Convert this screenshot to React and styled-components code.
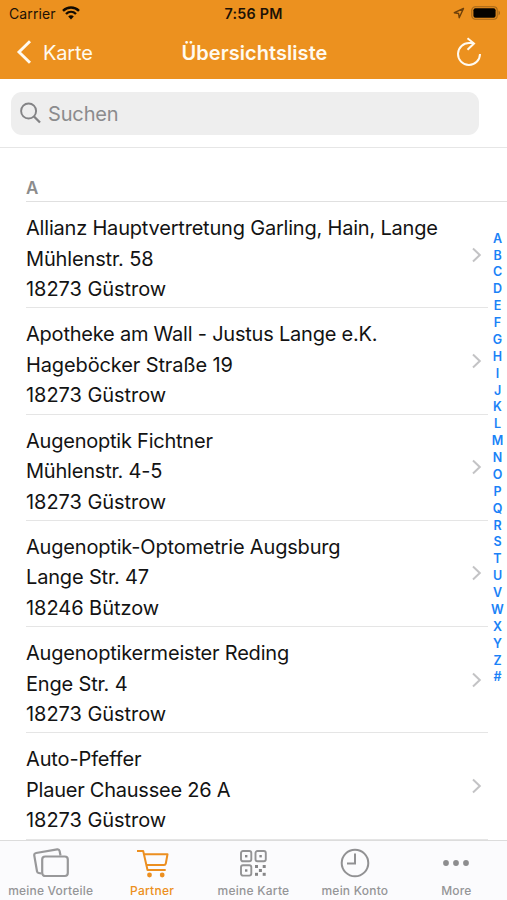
import React from "react";
import styled, { createGlobalStyle } from "styled-components";

const GlobalStyle = createGlobalStyle`
  * { box-sizing: border-box; }
  body {
    margin: 0;
    background: #fff;
    font-family: Inter, "Liberation Sans", sans-serif;
  }
`;

const Screen = styled.div`
  width: 507px;
  height: 900px;
  display: flex;
  flex-direction: column;
  overflow: hidden;
  background: #fff;
  color: #131313;
`;

const Header = styled.header`
  height: 79px;
  flex: none;
  background: #ec911f;
`;

const StatusBar = styled.div`
  height: 27px;
  display: grid;
  grid-template-columns: 1fr auto 1fr;
  align-items: center;
  padding: 1px 6px 0 9px;
  font-size: 14px;
  line-height: 26px;
  color: #1c1206;
`;

const StatusGroup = styled.div`
  display: flex;
  align-items: center;
  justify-content: ${(p) => (p.$end ? "flex-end" : "flex-start")};
  gap: 6px;
  padding-bottom: ${(p) => (p.$end ? 2 : 0)}px;
  letter-spacing: 0.12px;

  svg { margin-bottom: ${(p) => (p.$end ? 0 : 2)}px; }
`;

const Time = styled.div`
  font-weight: 600;
  font-size: 14.3px;
  letter-spacing: 0.25px;
  padding-right: 3px;
`;

const NavBar = styled.div`
  height: 52px;
  display: grid;
  grid-template-columns: 1fr auto 1fr;
  align-items: center;
  padding: 0 25px 0 16px;
  color: #fffaf0;
  font-size: 20px;
  line-height: 50px;
`;

const BackButton = styled.div`
  display: flex;
  align-items: center;
  gap: 11px;
  letter-spacing: -0.15px;

  svg { margin-bottom: 2px; }
`;

const Title = styled.div`
  font-weight: 600;
  letter-spacing: 0.05px;
  padding-left: 11px;
`;

const Refresh = styled.div`
  display: flex;
  justify-content: flex-end;
  padding-bottom: 3px;
`;

const SearchArea = styled.div`
  flex: none;
  height: 68.5px;
  padding: 12.5px 28px 0 11px;
  border-bottom: 1px solid #e6e6e6;
`;

const SearchField = styled.div`
  height: 43px;
  border-radius: 11px;
  background: #eeeeee;
  color: #8b8b8d;
  display: flex;
  align-items: center;
  gap: 7px;
  padding-left: 9px;
  font-size: 20px;
  line-height: 42px;
  padding-top: 2px;
  letter-spacing: -0.15px;

  svg { margin-bottom: 2px; }
`;

const SectionHeader = styled.div`
  flex: none;
  height: 54.5px;
  padding: 27.5px 0 0 26px;
  font-size: 17px;
  line-height: 26px;
  font-weight: 600;
  color: #8c8c8c;
`;

const SectionLine = styled.div`
  flex: none;
  height: 1px;
  margin-left: 26px;
  margin-top: -1px;
  background: #e0e0e0;
`;

const Content = styled.div`
  flex: 1;
  min-height: 0;
  display: flex;
`;

const List = styled.div`
  width: 488px;
  padding-left: 26px;
`;

const Row = styled.div`
  height: 106.25px;
  display: flex;
  justify-content: space-between;
  align-items: center;
  padding-right: 6px;
  border-bottom: 1px solid #e5e5e5;
`;

const Lines = styled.div`
  padding-top: 8.5px;
  font-size: 20px;
  line-height: 30.5px;
  white-space: nowrap;
`;

const Line = styled.div`
  letter-spacing: ${(p) => p.$track || 0}px;
`;

const IndexColumn = styled.div`
  width: 19px;
  padding-top: 28.7px;
  display: flex;
  flex-direction: column;
  align-items: center;
  color: #1a82f7;
  font-size: 12.5px;
  font-weight: 600;
  line-height: 16.87px;
`;

const TabBar = styled.nav`
  flex: none;
  height: 60.5px;
  display: grid;
  grid-template-columns: repeat(5, 1fr);
  border-top: 1px solid #dcdcdc;
  background: #fbfbfd;
`;

const Tab = styled.div`
  display: flex;
  flex-direction: column;
  align-items: center;
  color: ${(p) => (p.$active ? "#ec8f20" : "#959597")};
  font-size: 12px;
  line-height: 16px;
  font-weight: 500;
  white-space: nowrap;
  letter-spacing: ${(p) => p.$track || 0}px;
`;

const TabIcon = styled.div`
  height: 45px;
  margin-bottom: -3px;
  display: flex;
  align-items: center;
`;

const Chevron = () => (
  <svg width="10" height="16" viewBox="0 0 10 16" fill="none" stroke="#c3c3c5" strokeWidth="2">
    <path d="M1 1.5 7.8 8 1 14.5" />
  </svg>
);

const WifiIcon = () => (
  <svg width="18" height="14" viewBox="0 0 18 14" fill="none" stroke="#120b02" strokeWidth="2.4">
    <path d="M1 4.8C5.5.3 12.5.3 17 4.8" />
    <path d="M4 8c2.9-2.8 7.1-2.8 10 0" />
    <path d="M6.2 10.4c1.6-1.6 4-1.6 5.6 0L9 13.4z" fill="#120b02" stroke="none" />
  </svg>
);

const LocationIcon = () => (
  <svg width="12" height="12" viewBox="0 0 12 12" fill="none" stroke="#6d400a" strokeWidth="1.4" strokeLinejoin="round">
    <path d="M10.5 1.5 1.3 5.7l4.3.8.6 4.2z" />
  </svg>
);

const BatteryIcon = () => (
  <svg width="30" height="14" viewBox="0 0 30 14">
    <rect x=".8" y=".8" width="25.4" height="12.4" rx="3.5" fill="none" stroke="#a26618" strokeWidth="1.1" />
    <rect x="2.4" y="2.3" width="22.2" height="9.4" rx="2" fill="#050300" />
    <path d="M27.5 4.6c2 .8 2 4 0 4.8z" fill="#a26618" />
  </svg>
);

const BackIcon = () => (
  <svg width="16" height="24" viewBox="0 0 16 24" fill="none" stroke="#fffaf0" strokeWidth="2.9">
    <path d="M14 1.2 3 12l11 10.8" />
  </svg>
);

const RefreshIcon = () => (
  <svg width="26" height="30" viewBox="0 0 26 30" fill="none" stroke="#fffaf0" strokeWidth="2">
    <path d="M13.5 6A11 11 0 1 0 24 17" />
    <path d="M11.5 1.2 18 6.5l-6.5 6.2" />
    <path d="M13 6h5" />
  </svg>
);

const SearchIcon = () => (
  <svg width="21" height="22" viewBox="0 0 21 22" fill="none" stroke="#838385" strokeWidth="1.9">
    <circle cx="8.6" cy="9" r="7.5" />
    <path d="m14 14.5 6 6" strokeWidth="2.3" />
  </svg>
);

const CardsIcon = () => (
  <svg width="36" height="30" viewBox="0 0 36 30" fill="none" stroke="#98989a" strokeWidth="2.2">
    <path d="M8.5 25.5 5.7 25Q4.3 24.8 4 23.2L1.3 7.6Q.9 5.4 3.1 5L24.2 1.4q2-.3 2.4 1.6l.9 4.5" />
    <rect x="9.2" y="8.5" width="25.6" height="19.5" rx="3" />
  </svg>
);

const CartIcon = () => (
  <svg width="33" height="29" viewBox="0 0 33 29" fill="none" stroke="#ec8f20" strokeWidth="2" strokeLinejoin="round">
    <path d="M1 2h6.2l4.3 19h18.2M8 5.3h23.5l-1.7 9.2q-.3 1.5-1.8 1.5H10.5" />
    <circle cx="13.5" cy="26" r="2.4" fill="#ec8f20" stroke="none" />
    <circle cx="26.2" cy="26" r="2.4" fill="#ec8f20" stroke="none" />
  </svg>
);

const CodeIcon = () => (
  <svg width="27" height="27" viewBox="0 0 27 27" fill="none" stroke="#939395" strokeWidth="1.9">
    <rect x="1" y="1" width="10.3" height="10.3" rx="2" />
    <rect x="15.5" y="1" width="10.3" height="10.3" rx="2" />
    <rect x="1" y="15.3" width="10.3" height="10.3" rx="2" />
    <g fill="#858587" stroke="none">
      <rect x="5" y="5" width="2.4" height="2.4" />
      <rect x="19.4" y="5" width="2.4" height="2.4" />
      <rect x="5" y="19.3" width="2.4" height="2.4" />
      <rect x="15" y="15" width="3" height="3" />
      <rect x="22.7" y="15" width="3" height="3" />
      <rect x="18.9" y="19" width="3" height="3" />
      <rect x="15" y="22.8" width="3" height="3" />
      <rect x="22.7" y="22.8" width="3" height="3" />
    </g>
  </svg>
);

const ClockIcon = () => (
  <svg width="30" height="30" viewBox="0 0 30 30" fill="none" stroke="#919193" strokeWidth="2">
    <circle cx="15" cy="15" r="13.3" />
    <path d="M15 5.5v10H7" />
  </svg>
);

const MoreIcon = () => (
  <svg width="28" height="8" viewBox="0 0 28 8" fill="#8d8d8f">
    <circle cx="4" cy="4" r="2.9" />
    <circle cx="14" cy="4" r="2.9" />
    <circle cx="24" cy="4" r="2.9" />
  </svg>
);

const partners = [
  [["Allianz Hauptvertretung Garling, Hain, Lange", -0.2], ["Mühlenstr. 58", -0.15], ["18273 Güstrow", -0.04]],
  [["Apotheke am Wall - Justus Lange e.K.", -0.22], ["Hageböcker Straße 19", -0.12], ["18273 Güstrow", -0.04]],
  [["Augenoptik Fichtner", -0.23], ["Mühlenstr. 4-5", -0.2], ["18273 Güstrow", -0.04]],
  [["Augenoptik-Optometrie Augsburg", -0.18], ["Lange Str. 47", -0.17], ["18246 Bützow", -0.04]],
  [["Augenoptikermeister Reding", -0.2], ["Enge Str. 4", -0.18], ["18273 Güstrow", -0.04]],
  [["Auto-Pfeffer", -0.13], ["Plauer Chaussee 26 A", -0.24], ["18273 Güstrow", -0.04]],
];

const tabs = [
  { label: "meine Vorteile", Icon: CardsIcon, track: 0.2 },
  { label: "Partner", Icon: CartIcon, track: 0.25, active: true },
  { label: "meine Karte", Icon: CodeIcon, track: 0.25 },
  { label: "mein Konto", Icon: ClockIcon, track: 0.22 },
  { label: "More", Icon: MoreIcon, track: 0.1 },
];

export default function App() {
  return (
    <Screen>
      <GlobalStyle />
      <Header>
        <StatusBar>
          <StatusGroup>Carrier <WifiIcon /></StatusGroup>
          <Time>7:56 PM</Time>
          <StatusGroup $end><LocationIcon /><BatteryIcon /></StatusGroup>
        </StatusBar>
        <NavBar>
          <BackButton><BackIcon />Karte</BackButton>
          <Title>Übersichtsliste</Title>
          <Refresh><RefreshIcon /></Refresh>
        </NavBar>
      </Header>
      <SearchArea>
        <SearchField><SearchIcon />Suchen</SearchField>
      </SearchArea>
      <SectionHeader>A</SectionHeader>
      <SectionLine />
      <Content>
        <List>
          {partners.map((lines) => (
            <Row key={lines[0][0]}>
              <Lines>
                {lines.map(([text, track]) => <Line key={text} $track={track}>{text}</Line>)}
              </Lines>
              <Chevron />
            </Row>
          ))}
        </List>
        <IndexColumn>
          {[..."ABCDEFGHIJKLMNOPQRSTUVWXYZ#"].map((c) => <span key={c}>{c}</span>)}
        </IndexColumn>
      </Content>
      <TabBar>
        {tabs.map(({ label, Icon, track, active }) => (
          <Tab key={label} $active={active} $track={track}>
            <TabIcon><Icon /></TabIcon>
            {label}
          </Tab>
        ))}
      </TabBar>
    </Screen>
  );
}
